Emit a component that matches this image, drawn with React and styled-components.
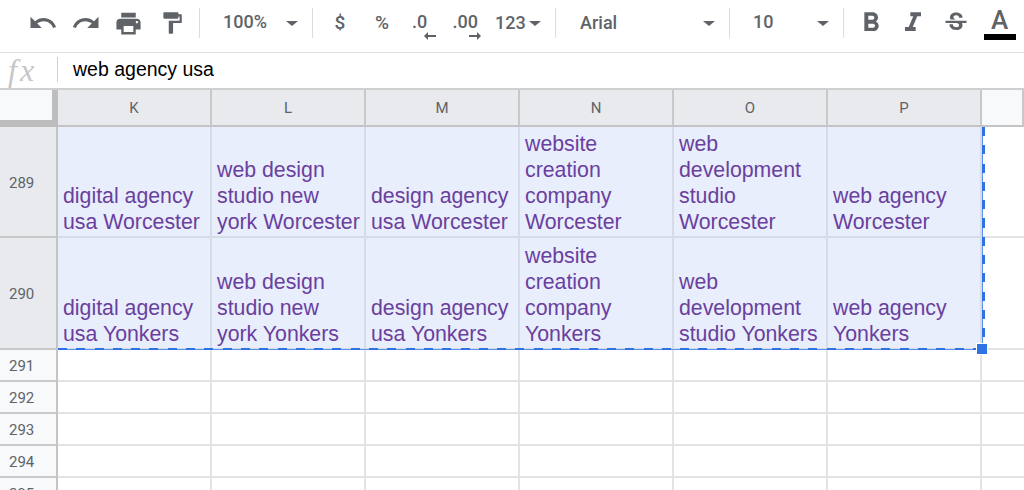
import styled, { createGlobalStyle } from 'styled-components';

const GlobalStyle = createGlobalStyle`
  html, body {
    margin: 0;
    background: #fff;
  }
  body {
    width: 1024px;
    height: 490px;
    overflow: hidden;
    font-family: 'Liberation Sans', Arial, sans-serif;
  }
`;

const Page = styled.div`
  width: 1024px;
  height: 490px;
  overflow: hidden;
`;

const Toolbar = styled.div`
  display: flex;
  align-items: flex-start;
  box-sizing: border-box;
  height: 53px;
  padding: 8px 0 0 21px;
  border-bottom: 1px solid #e0e0e0;
  color: #5f6368;
  font-family: Roboto, sans-serif;
`;

const Tool = styled.div`
  display: flex;
  align-items: center;
  justify-content: center;
  flex: none;
  width: ${(p) => p.$w || 43}px;
  height: 30px;
  font-size: 19px;
  font-weight: 500;
`;

const Sep = styled.div`
  flex: none;
  width: 1px;
  height: 30px;
  margin: 0 6px;
  background: #dadce0;
`;

const Select = styled.div`
  display: flex;
  align-items: center;
  justify-content: space-between;
  flex: none;
  box-sizing: border-box;
  width: ${(p) => p.$w}px;
  height: 30px;
  padding: 0 8px 0 ${(p) => p.$left}px;
  font-size: 18px;
  font-weight: 500;
  color: #5f6368;
`;

const Label = styled.span`
  margin-bottom: ${(p) => p.$up || 2}px;
`;

const Caret = styled.span`
  width: 0;
  height: 0;
  border-left: 6px solid transparent;
  border-right: 6px solid transparent;
  border-top: 5px solid #5f6368;
`;

const Decimal = styled.div`
  display: flex;
  flex-direction: column;
  align-self: flex-start;
  margin-top: 4px;
  line-height: 20px;
  font-size: 18px;
  font-weight: 500;
  svg {
    margin-left: ${(p) => p.$shift}px;
  }
`;

const TextColor = styled.div`
  display: flex;
  flex-direction: column;
  align-items: center;
  width: 32px;
  height: 33px;
  font-size: 26px;
  font-weight: 500;
  line-height: 27px;
`;

const ColorBar = styled.div`
  width: 32px;
  height: 6px;
  background: #000;
`;

const FormulaBar = styled.div`
  display: flex;
  align-items: center;
  box-sizing: border-box;
  height: 37px;
  padding-bottom: 2px;
  border-bottom: 2px solid #cfcfcf;
`;

const Fx = styled.div`
  width: 57px;
  box-sizing: border-box;
  padding-left: 8px;
  font-family: 'Liberation Serif', serif;
  font-style: italic;
  font-size: 32px;
  letter-spacing: 3px;
  line-height: 32px;
  color: #c6c6c6;
`;

const FormulaSep = styled.div`
  width: 1px;
  height: 25px;
  background: #d0d0d0;
`;

const FormulaText = styled.div`
  padding-left: 15px;
  font-size: 19.5px;
  color: #000;
`;

const HeaderRow = styled.div`
  display: grid;
  grid-template-columns: 58px repeat(6, 154px) 1fr;
  height: 37px;
  box-sizing: border-box;
  border-bottom: 2px solid #c4c4c4;
  background: #f8f9fa;
`;

const Corner = styled.div`
  box-sizing: border-box;
  border-right: 6px solid #bdbdbd;
  border-bottom: 7px solid #bdbdbd;
  margin-bottom: -2px;
  background: #f8f9fa;
`;

const ColHead = styled.div`
  display: flex;
  align-items: center;
  justify-content: center;
  box-sizing: border-box;
  border-right: 2px solid #c8c8c8;
  background: ${(p) => (p.$last ? '#f8f9fa' : '#e8eaed')};
  font-family: Roboto, sans-serif;
  font-size: 15px;
  color: #5f6368;
`;

const Grid = styled.div`
  position: relative;
  display: grid;
  grid-template-columns: 58px repeat(6, 154px) 1fr;
  grid-auto-rows: 32px;
  grid-template-rows: 111px 112px;
`;

const RowHead = styled.div`
  display: flex;
  align-items: center;
  box-sizing: border-box;
  padding: 2px 0 0 9px;
  border-right: 2px solid #c4c4c4;
  border-bottom: 2px solid #c8c8c8;
  background: ${(p) => (p.$selected ? '#e8eaed' : '#f8f9fa')};
  font-family: Roboto, sans-serif;
  font-size: 15px;
  color: #5f6368;
`;

const Cell = styled.div`
  display: flex;
  align-items: flex-end;
  box-sizing: border-box;
  padding: 0 1px 1px 5px;
  border-right: 2px solid ${(p) => (p.$selected ? '#d6dbe8' : '#e2e3e3')};
  border-bottom: 2px solid ${(p) => (p.$selected ? '#d6dbe8' : '#e2e3e3')};
  background: ${(p) => (p.$selected ? '#e8eefc' : '#fff')};
  font-size: 21.3px;
  line-height: 26px;
  color: #6a3f9e;
`;

const BlankCell = styled.div`
  box-sizing: border-box;
  border-bottom: 2px solid #e2e3e3;
  background: #fff;
`;

const Selection = styled.div`
  position: absolute;
  left: 58px;
  top: 0;
  width: 925px;
  height: 223px;
  box-sizing: border-box;
  border-right: 1px solid #5b90ee;
  border-bottom: 1px solid #5b90ee;
  pointer-events: none;
  &::before {
    content: '';
    position: absolute;
    right: -3px;
    top: 0;
    bottom: 0;
    width: 3px;
    background: repeating-linear-gradient(to bottom, #2f72e4 0 9px, transparent 9px 18.3px);
  }
  &::after {
    content: '';
    position: absolute;
    left: 0;
    right: 0;
    bottom: -1px;
    height: 2px;
    background: repeating-linear-gradient(to right, #2f72e4 0 9px, transparent 9px 18.3px);
  }
`;

const Handle = styled.div`
  position: absolute;
  right: -6px;
  bottom: -6px;
  z-index: 1;
  width: 10px;
  height: 10px;
  background: #2f72e4;
  border: 1px solid #fff;
`;

const Icon = ({ d, size = 30 }) => (
  <svg width={size} height={size} viewBox="0 0 24 24" fill="#5f6368">
    <path d={d} />
  </svg>
);

const paths = {
  undo: 'M12.5 8c-2.65 0-5.05.99-6.9 2.6L2 7v9h9l-3.62-3.62c1.39-1.16 3.16-1.88 5.12-1.88 3.54 0 6.55 2.31 7.6 5.5l2.37-.78C21.08 11.03 17.15 8 12.5 8z',
  redo: 'M18.4 10.6C16.55 8.99 14.15 8 11.5 8c-4.65 0-8.58 3.03-9.96 7.22L3.9 16c1.05-3.19 4.05-5.5 7.6-5.5 1.95 0 3.73.72 5.12 1.88L13 16h9V7l-3.6 3.6z',
  print: 'M19 8H5c-1.66 0-3 1.34-3 3v6h4v4h12v-4h4v-6c0-1.66-1.34-3-3-3zm-3 11H8v-5h8v5zm3-7c-.55 0-1-.45-1-1s.45-1 1-1 1 .45 1 1-.45 1-1 1zm-1-9H6v4h12V3z',
  paint: 'M18 4V3c0-.55-.45-1-1-1H5c-.55 0-1 .45-1 1v4c0 .55.45 1 1 1h12c.55 0 1-.45 1-1V6h1v4H9v11c0 .55.45 1 1 1h2c.55 0 1-.45 1-1v-9h8V4h-3z',
  bold: 'M15.6 10.79c.97-.67 1.65-1.77 1.65-2.79 0-2.26-1.75-4-4-4H7v14h7.04c2.09 0 3.71-1.7 3.71-3.79 0-1.52-.86-2.82-2.15-3.42zM10 6.5h3c.83 0 1.5.67 1.5 1.5s-.67 1.5-1.5 1.5h-3v-3zm3.5 9H10v-3h3.5c.83 0 1.5.67 1.5 1.5s-.67 1.5-1.5 1.5z',
  italic: 'M10 4v3h2.21l-3.42 8H6v3h8v-3h-2.21l3.42-8H18V4z',
  strike:
    'M7.24 8.75c-.26-.48-.39-1.03-.39-1.67 0-.61.13-1.16.4-1.67.26-.5.63-.93 1.11-1.29.48-.35 1.05-.63 1.7-.83.66-.19 1.39-.29 2.18-.29.81 0 1.54.11 2.21.34.66.22 1.23.54 1.69.94.47.4.83.88 1.08 1.43.25.55.38 1.15.38 1.81h-3.01c0-.31-.05-.59-.15-.85-.09-.27-.24-.49-.44-.68-.2-.19-.45-.33-.75-.44-.3-.1-.66-.16-1.06-.16-.39 0-.74.04-1.03.13-.29.09-.53.21-.72.36-.19.16-.34.34-.44.55-.1.21-.15.43-.15.66 0 .48.25.88.74 1.21.38.25.77.48 1.41.7H7.39c-.05-.08-.11-.17-.15-.25zM21 12v-2H3v2h9.62c.18.07.4.14.55.2.37.17.66.34.87.51.21.17.35.36.43.57.07.2.11.43.11.69 0 .23-.05.45-.14.66-.09.2-.23.38-.42.53-.19.15-.42.26-.71.35-.29.08-.63.13-1.01.13-.43 0-.83-.04-1.18-.13s-.66-.23-.91-.42c-.25-.19-.45-.44-.59-.75-.14-.31-.25-.76-.25-1.21H6.4c0 .55.08 1.13.24 1.58.16.45.37.85.65 1.21.28.35.6.66.98.92.37.26.78.48 1.22.65.44.17.9.3 1.38.39.48.08.96.13 1.44.13.8 0 1.53-.09 2.18-.28s1.21-.45 1.67-.79c.46-.34.82-.77 1.07-1.27s.38-1.07.38-1.71c0-.6-.1-1.14-.31-1.61-.05-.11-.11-.23-.17-.33H21z',
};

const Arrow = ({ left }) => (
  <svg width="12" height="8" viewBox="0 0 12 8" fill="#5f6368">
    <path d={left ? 'M4 0v3h8v2H4v3L0 4z' : 'M8 0v3H0v2h8v3l4-4z'} />
  </svg>
);

const columns = ['K', 'L', 'M', 'N', 'O', 'P'];

const phrases = [
  'digital agency usa',
  'web design studio new york',
  'design agency usa',
  'website creation company',
  'web development studio',
  'web agency',
];

const selectedRows = [
  { num: 289, city: 'Worcester' },
  { num: 290, city: 'Yonkers' },
];

const emptyRows = [291, 292, 293, 294, 295];

export default function App() {
  return (
    <Page>
      <GlobalStyle />
      <Toolbar>
        <Tool><Icon d={paths.undo} /></Tool>
        <Tool><Icon d={paths.redo} /></Tool>
        <Tool><Icon d={paths.print} size={29} /></Tool>
        <Tool><Icon d={paths.paint} size={26} /></Tool>
        <Sep />
        <Select $w={100} $left={17}><Label $up={4}>100%</Label><Caret /></Select>
        <Sep />
        <Tool $w={42}><Label>$</Label></Tool>
        <Tool $w={42}><Label>%</Label></Tool>
        <Tool $w={42}>
          <Decimal $shift={12}>.0<Arrow left /></Decimal>
        </Tool>
        <Tool $w={43}>
          <Decimal $shift={16}>.00<Arrow /></Decimal>
        </Tool>
        <Select $w={61} $left={7}><Label>123</Label><Caret /></Select>
        <Sep />
        <Select $w={161} $left={18}><Label>Arial</Label><Caret /></Select>
        <Sep />
        <Select $w={101} $left={17}><Label $up={4}>10</Label><Caret /></Select>
        <Sep />
        <Tool $w={42}><Icon d={paths.bold} size={32} /></Tool>
        <Tool $w={42}><Icon d={paths.italic} size={32} /></Tool>
        <Tool $w={44}><Icon d={paths.strike} size={28} /></Tool>
        <Tool $w={43}>
          <TextColor>A<ColorBar /></TextColor>
        </Tool>
      </Toolbar>
      <FormulaBar>
        <Fx>fx</Fx>
        <FormulaSep />
        <FormulaText>web agency usa</FormulaText>
      </FormulaBar>
      <HeaderRow>
        <Corner />
        {columns.map((c) => (
          <ColHead key={c}>{c}</ColHead>
        ))}
        <ColHead $last />
      </HeaderRow>
      <Grid>
        {selectedRows.map((row) => (
          <div key={row.num} style={{ display: 'contents' }}>
            <RowHead $selected>{row.num}</RowHead>
            {phrases.map((p) => (
              <Cell key={p} $selected>
                <span>{p} {row.city}</span>
              </Cell>
            ))}
            <BlankCell />
          </div>
        ))}
        {emptyRows.map((num) => (
          <div key={num} style={{ display: 'contents' }}>
            <RowHead>{num}</RowHead>
            {columns.map((c) => (
              <Cell key={c} />
            ))}
            <BlankCell />
          </div>
        ))}
        <Selection>
          <Handle />
        </Selection>
      </Grid>
    </Page>
  );
}
